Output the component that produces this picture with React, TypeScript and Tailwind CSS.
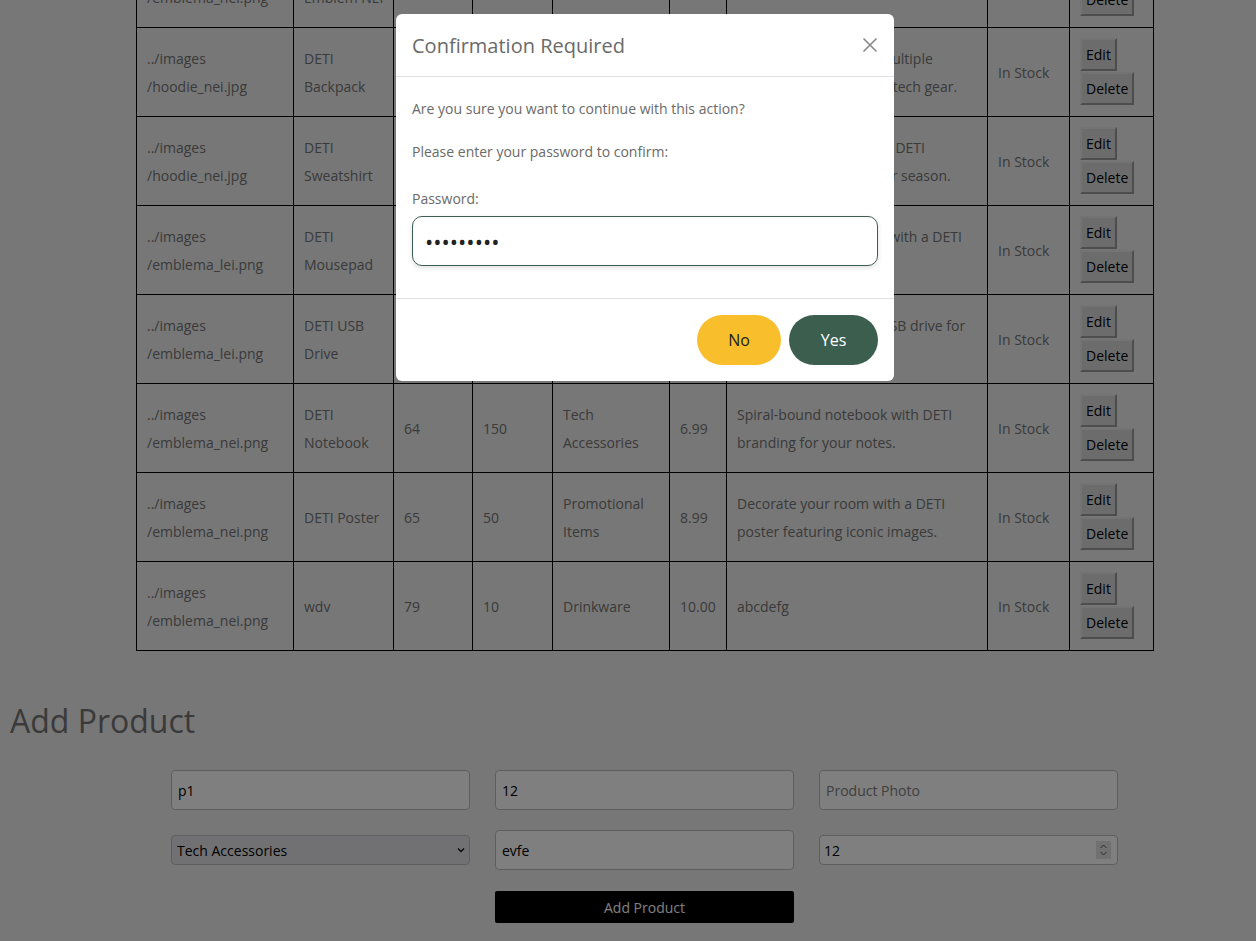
import React from "react";

type Row = {
  img: [string, string];
  name: React.ReactNode;
  id: string;
  stock: string;
  cat: string;
  price: string;
  desc: string;
};

const rows: Row[] = [
  {
    img: ["../images", "/emblema_nei.png"],
    name: (
      <>
        DETI
        <br />
        <span className="whitespace-nowrap">Emblem NEI</span>
      </>
    ),
    id: "58",
    stock: "200",
    cat: "Stickers",
    price: "2.99",
    desc: "Official NEI emblem.",
  },
  { img: ["../images", "/hoodie_nei.jpg"], name: "DETI Backpack", id: "59", stock: "40", cat: "Bags", price: "29.99", desc: "Sturdy backpack with multiple compartments for your tech gear." },
  { img: ["../images", "/hoodie_nei.jpg"], name: "DETI Sweatshirt", id: "60", stock: "80", cat: "Clothing", price: "24.99", desc: "Stay warm with our soft DETI sweatshirt for the winter season." },
  { img: ["../images", "/emblema_lei.png"], name: "DETI Mousepad", id: "62", stock: "120", cat: "Tech Accessories", price: "5.99", desc: "Personalize your setup with a DETI mousepad." },
  { img: ["../images", "/emblema_lei.png"], name: "DETI USB Drive", id: "63", stock: "90", cat: "Tech Accessories", price: "12.99", desc: "Compact and reliable USB drive for all your important files." },
  { img: ["../images", "/emblema_nei.png"], name: "DETI Notebook", id: "64", stock: "150", cat: "Tech Accessories", price: "6.99", desc: "Spiral-bound notebook with DETI branding for your notes." },
  { img: ["../images", "/emblema_nei.png"], name: "DETI Poster", id: "65", stock: "50", cat: "Promotional Items", price: "8.99", desc: "Decorate your room with a DETI poster featuring iconic images." },
  { img: ["../images", "/emblema_nei.png"], name: "wdv", id: "79", stock: "10", cat: "Drinkware", price: "10.00", desc: "abcdefg" },
];

const tdBase = "border border-black px-[10px] align-middle text-[14px] leading-[28px] text-[#757575]";
const td = tdBase + " pt-[2px] pb-0";
const tdBtns = tdBase + " pt-0 pb-[2px]";
const tableBtn =
  "block bg-[#d9d9d9] text-black text-[14px] leading-[19px] px-[4px] py-[5px] border-2 border-t-[#e6e6e6] border-l-[#e6e6e6] border-r-[#9a9a9a] border-b-[#9a9a9a]";
const inputBox =
  "h-[40px] w-full rounded-[4px] border border-[#bdbdbd] bg-white px-[6px] text-[14px] text-black placeholder:text-[#808080] outline-none";

export default function App() {
  return (
    <div className="relative h-[941px] w-[1256px] overflow-hidden bg-[#eeeeee] font-['Open_Sans',sans-serif]">
      <div className="overflow-hidden">
        <table className="ml-[136px] mt-[-62px] w-[1017px] table-fixed border-collapse">
          <colgroup>
            <col className="w-[157px]" />
            <col className="w-[100px]" />
            <col className="w-[79px]" />
            <col className="w-[80px]" />
            <col className="w-[117px]" />
            <col className="w-[57px]" />
            <col className="w-[261px]" />
            <col className="w-[82px]" />
            <col className="w-[84px]" />
          </colgroup>
          <tbody>
            {rows.map((r, i) => (
              <tr key={i} className="h-[89px]">
                <td className={td}>
                  {r.img[0]}
                  <br />
                  {r.img[1]}
                </td>
                <td className={td}>{r.name}</td>
                <td className={td}>{r.id}</td>
                <td className={td}>{r.stock}</td>
                <td className={td}>{r.cat}</td>
                <td className={td}>{r.price}</td>
                <td className={td}>{r.desc}</td>
                <td className={td}>In Stock</td>
                <td className={tdBtns}>
                  <div className="flex flex-col items-start gap-[1px]">
                    <button className={tableBtn}>Edit</button>
                    <button className={tableBtn}>Delete</button>
                  </div>
                </td>
              </tr>
            ))}
          </tbody>
        </table>
      </div>

      <h2 className="ml-[10px] mt-[51px] text-[32px] leading-[38px] font-normal text-[#757575]">Add Product</h2>

      <form className="ml-[171px] mt-[30px] grid w-[947px] grid-cols-3 items-center gap-x-[25px] gap-y-[20px]">
        <input className={inputBox} defaultValue="p1" />
        <input className={inputBox} defaultValue="12" />
        <input className={inputBox} placeholder="Product Photo" />

        <div className="flex h-[30px] items-center rounded-[4px] border border-[#bdbdbd] bg-[#e3e3e6] pr-[3px]">
          <select className="h-full flex-1 appearance-none bg-transparent pl-[5px] text-[14px] text-black outline-none">
            <option>Tech Accessories</option>
          </select>
          <svg width="10" height="10" viewBox="0 0 10 10" fill="none" stroke="#111" strokeWidth="1.4">
            <path d="M2 3.5 L5 6.5 L8 3.5" />
          </svg>
        </div>
        <input className={inputBox} defaultValue="evfe" />
        <div className="flex h-[30px] items-center rounded-[4px] border border-[#bdbdbd] bg-white pr-[6px]">
          <input className="h-full min-w-0 flex-1 bg-transparent pl-[4px] text-[14px] text-black outline-none" defaultValue="12" />
          <div className="flex h-[18px] w-[15px] items-center justify-center bg-[#e3e3e3]">
            <svg width="9" height="14" viewBox="0 0 9 14" fill="none" stroke="#555" strokeWidth="1">
              <path d="M1.5 5 L4.5 2 L7.5 5" />
              <path d="M1.5 9 L4.5 12 L7.5 9" />
            </svg>
          </div>
        </div>

        <button type="button" className="col-start-2 mt-[1px] h-[32px] rounded-[2px] bg-black text-[14px] text-white">
          Add Product
        </button>
      </form>

      {/* backdrop */}
      <div className="fixed inset-0 z-10 bg-black/50" />

      {/* modal */}
      <div className="absolute left-[396px] top-[14px] z-20 w-[498px] rounded-[6px] bg-white">
        <div className="flex h-[63px] items-center justify-between border-b border-[#dee2e6] px-4">
          <h5 className="pt-[1px] text-[20px] leading-[30px] text-[#6a6a6a]">Confirmation Required</h5>
          <svg width="16" height="16" viewBox="0 0 16 16" stroke="#888" strokeWidth="1.6">
            <path d="M1.5 1.5 L14.5 14.5 M14.5 1.5 L1.5 14.5" />
          </svg>
        </div>
        <div className="px-4 pb-8 pt-[18px] text-[14px] leading-[28px] text-[#6a6a6a]">
          <p className="mb-[15px]">Are you sure you want to continue with this action?</p>
          <p className="mb-[19px]">Please enter your password to confirm:</p>
          <label className="mb-[3px] block">Password:</label>
          <input
            type="password"
            readOnly
            defaultValue="123456789"
            className="h-[50px] w-full rounded-[10px] border border-[#3b5e4f] px-[12px] text-[22px] text-[#222] shadow-[0_2px_5px_rgba(0,0,0,0.12)] outline-none"
          />
        </div>
        <div className="flex justify-end gap-2 border-t border-[#dee2e6] p-4">
          <button className="h-[50px] w-[84px] rounded-full bg-[#f8be2b] text-[16px] text-[#222]">No</button>
          <button className="h-[50px] w-[89px] rounded-full bg-[#3b5e4f] text-[16px] text-white">Yes</button>
        </div>
      </div>
    </div>
  );
}
